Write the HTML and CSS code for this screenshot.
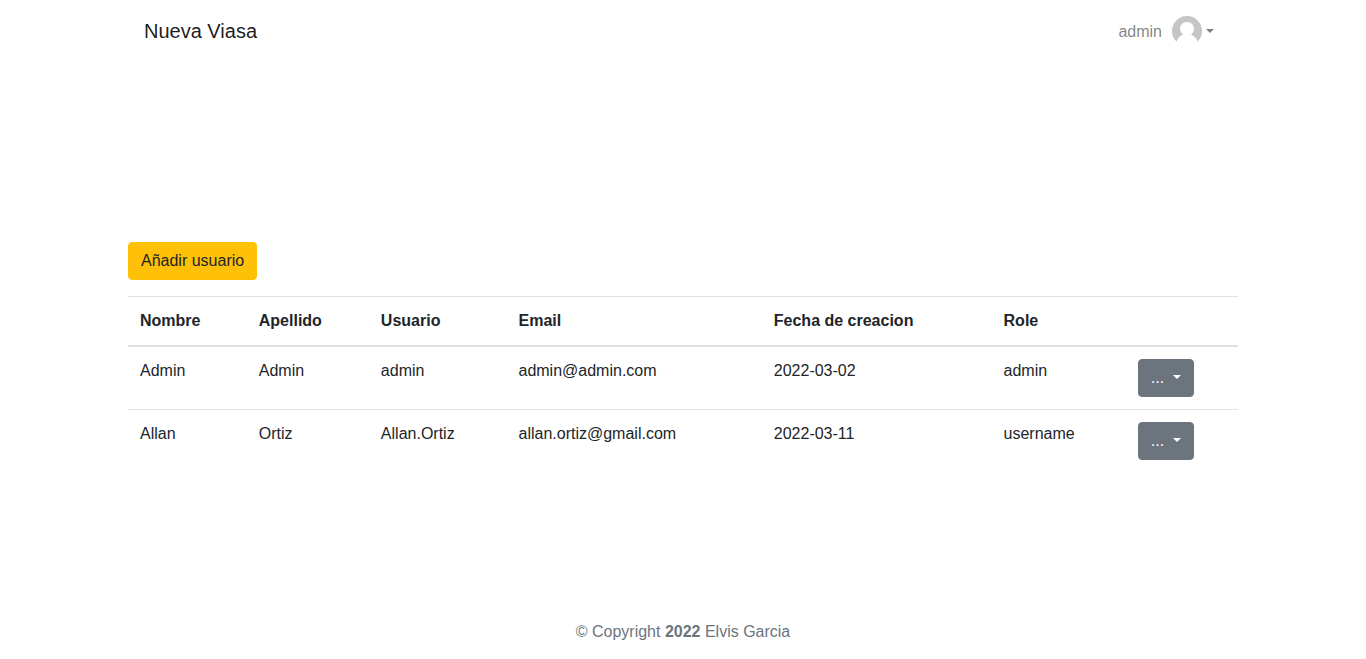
FILE: index.html
```html
<!DOCTYPE html>
<html lang="es">
<head>
<meta charset="utf-8">
<meta name="viewport" content="width=device-width, initial-scale=1">
<title>Nueva Viasa</title>
<link rel="stylesheet" href="styles.css">
</head>
<body>
<header class="navbar container">
  <a class="brand" href="#">Nueva Viasa</a>
  <a class="user-menu caret" href="#"><span class="user-name">admin</span><svg class="avatar" viewBox="0 0 30 30" aria-hidden="true"><circle cx="15" cy="15" r="15" fill="#c5c5c5"/><path d="M15 6c4 0 7 3 7 6.500 0 2.500-1 4.500-3 6C22 20 24.500 22 25.500 26L25 30H5L4.500 26C5.500 22 8 20 11 18.500 9 17 8 15 8 12.500 8 9 11 6 15 6z" fill="#fff"/></svg></a>
</header>
<main class="container content">
  <button class="btn btn-warning" type="button">Añadir usuario</button>
  <table class="table">
    <colgroup><col class="col-first"><col class="col-last"><col class="col-user"><col class="col-email"><col class="col-date"><col class="col-role"><col></colgroup>
    <thead>
      <tr><th scope="col">Nombre</th><th scope="col">Apellido</th><th scope="col">Usuario</th><th scope="col">Email</th><th scope="col">Fecha de creacion</th><th scope="col">Role</th><th></th></tr>
    </thead>
    <tbody>
      <tr><td>Admin</td><td>Admin</td><td>admin</td><td>admin@admin.com</td><td>2022-03-02</td><td>admin</td><td><button class="btn btn-secondary caret" type="button">... </button></td></tr>
      <tr><td>Allan</td><td>Ortiz</td><td>Allan.Ortiz</td><td>allan.ortiz@gmail.com</td><td>2022-03-11</td><td>username</td><td><button class="btn btn-secondary caret" type="button">... </button></td></tr>
    </tbody>
  </table>
</main>
<footer class="footer">© Copyright <strong>2022</strong> Elvis Garcia</footer>
</body>
</html>
```
FILE: styles.css
```css
*, *::before, *::after { box-sizing: border-box; }
body {
  display: flex;
  flex-direction: column;
  min-height: 100vh;
  margin: 0;
  font: 16px/24px "Liberation Sans", Arial, sans-serif;
  color: #212529;
  background: #fff;
}
.container {
  width: 100%;
  max-width: 1140px;
  margin: 0 auto;
  padding: 0 15px;
}
.navbar {
  display: flex;
  align-items: center;
  justify-content: space-between;
  padding: 16px 39px 16px 31px;
}
.brand {
  font-size: 20px;
  line-height: 30px;
  color: rgba(0, 0, 0, .9);
  text-decoration: none;
}
.user-menu {
  display: flex;
  align-items: center;
  color: rgba(0, 0, 0, .5);
  text-decoration: none;
}
.user-name {
  margin-right: 10px;
  padding-top: 2px;
}
.avatar {
  display: block;
  width: 30px;
  height: 30px;
}
.caret::after {
  display: inline-block;
  margin-left: 4px;
  vertical-align: 4px;
  content: "";
  border-top: 4px solid;
  border-right: 4px solid transparent;
  border-left: 4px solid transparent;
}
.content {
  flex: 1;
  padding-top: 180px;
}
.btn {
  display: inline-block;
  padding: 6px 12px;
  border: 1px solid transparent;
  border-radius: 4px;
  font: inherit;
  cursor: pointer;
}
.btn-warning {
  color: #212529;
  background: #ffc107;
  border-color: #ffc107;
}
.btn-secondary {
  color: #fff;
  background: #6c757d;
  border-color: #6c757d;
  white-space: pre;
}
.table {
  width: 100%;
  margin: 16px 0;
  border-collapse: collapse;
  table-layout: fixed;
}
.table th, .table td {
  padding: 12px;
  border-top: 1px solid #dee2e6;
  text-align: left;
  vertical-align: top;
}
.table thead th {
  border-bottom: 2px solid #dee2e6;
}
.table td .btn { display: block; }
.col-first { width: 10.7%; }
.col-last { width: 11%; }
.col-user { width: 12.4%; }
.col-email { width: 23%; }
.col-date { width: 20.7%; }
.col-role { width: 12.1%; }
.footer {
  padding: 16px 16px 15px;
  text-align: center;
  color: #6c757d;
}
```
